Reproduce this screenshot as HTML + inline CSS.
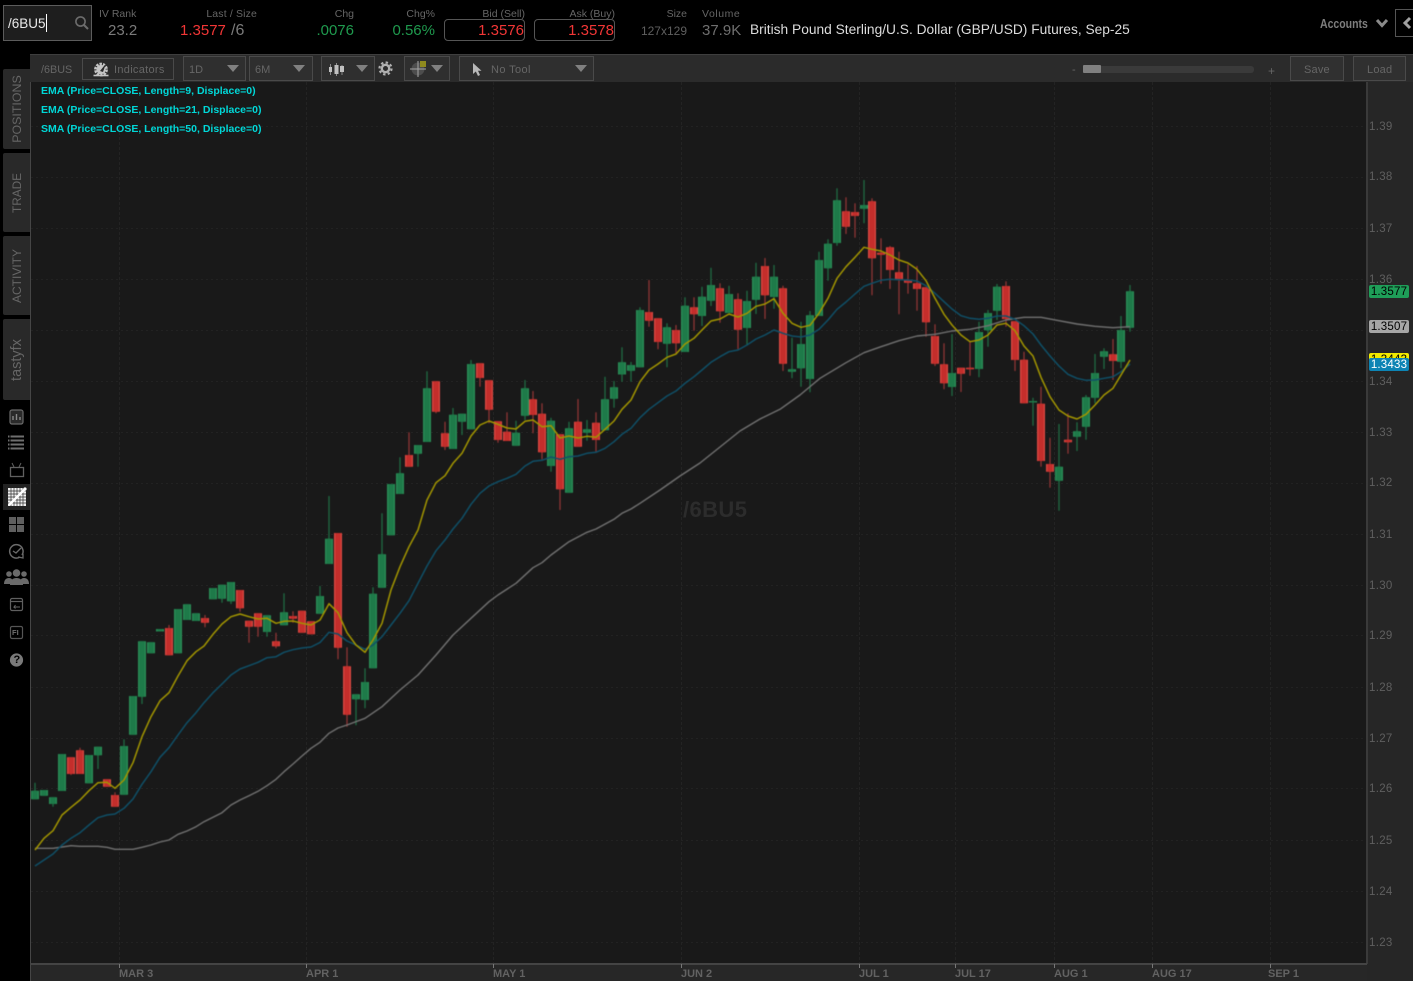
<!DOCTYPE html>
<html lang="en"><head><meta charset="utf-8"><title>/6BU5 chart</title>
<style>
html,body{margin:0;padding:0;background:#000;}
#p{position:relative;width:1413px;height:981px;overflow:hidden;background:#000;font-family:"Liberation Sans",sans-serif;}
#p div,#p span.a{position:absolute;white-space:nowrap;}
.lb{font-size:10.5px;color:#666;top:8px;line-height:13px;}
.v{font-size:15px;top:22px;line-height:18px;}
.r{text-align:right;}
.btn{background:#2a2a2a;border:1px solid #4a4a4a;box-sizing:border-box;color:#666;font-size:11px;}
.tri{width:0;height:0;border-left:6.5px solid transparent;border-right:6.5px solid transparent;border-top:7px solid #808080;}
.tab{left:3px;width:27px;background:#292929;border-radius:2px 0 0 2px;}
.tab span{position:absolute;left:50%;top:50%;transform:translate(-50%,-50%) rotate(-90deg);color:#666;font-size:12.4px;white-space:nowrap;}
.px{left:1369px;font-size:11.5px;color:#5f5f5f;line-height:13px;letter-spacing:.3px;}
.dt{font-size:11px;font-weight:bold;color:#626262;top:968px;line-height:13px;}
.st{left:41px;color:#00d8d8;font-size:10.5px;line-height:13px;font-weight:bold;}
.pill{left:1369px;width:40px;height:13px;overflow:hidden;border-radius:2px;font-size:11.5px;line-height:15px;text-align:center;letter-spacing:.2px;}
</style></head><body><div id="p">

<!-- chart -->
<svg style="position:absolute;left:0;top:0" width="1413" height="981" viewBox="0 0 1413 981">
<defs>
<path id="gb" d="M35 790.7V799.3M44 790V795.7M53 797.3V804M62 754V791M89 755V783.3M98 746.7V755.3M124 746V794.7M133 696V734.7M142 641.3V696.7M151 642.3V653.3M160 629V631.5M178 609V653.3M187 604.3V620M196 613.3V621M213 588V599.3M222 584.7V598.7M231 582V601.3M267 615.3V632M284 612.3V625.3M320 596V613.7M329 538.7V564M356 694.3V699.3M365 682V700M373 593.7V668.3M382 554.3V587.7M391 484V535.3M400 473.3V494M418 445V453.7M427 388.3V442M453 414.7V449M462 413.7V421.7M471 364V429.3M516 432.7V445.7M525 388.3V415.7M551 420.7V466M569 428.3V492.7M587 429.3V432.7M605 399.3V430.3M614 387.3V398.7M622 362.3V374.5M631 365V370.7M640 310V367.3M667 327.3V343.7M685 305.7V352M702 296.7V316M711 285V300.7M729 294V313M747 301V328M756 276.7V299.7M774 276.7V297M792 369.3V371.7M801 344V368.3M810 315.3V379M819 260V316M828 243.7V268.3M837 200.3V243M864 205V208.7M952 373V387M979 332V369M988 313V330.3M997 286.7V310.7M1033 401V402.5M1059 466.7V480.7M1077 431.3V436.7M1086 397.3V426.7M1095 373V397.7M1104 351.3V356.7M1121 330V361.7M1130 291.3V327.7"/>
<path id="rb" d="M71 757.3V774M80 750.3V774M107 779.3V786.7M115 795V806.7M169 628V655.3M205 618V622.7M240 590V608.3M249 620.7V626.7M258 613.3V626.7M276 641.3V646.3M293 616V618.7M302 610.7V632.7M311 621.3V634.3M338 533V647.7M347 666.3V714.7M409 455V466.7M436 381.3V411.7M445 433.3V446.7M480 363.3V378M489 380.3V409.7M498 421.3V440M507 431.7V441M533 399.3V415M542 413.7V452.3M560 434.3V489.3M578 421.7V446.7M596 422.7V440M649 312V320.7M658 318.3V342M676 330V343.3M694 307.3V314.3M720 288.3V311.3M738 299.3V329.7M765 266V295.3M783 288.3V363.7M846 211.3V226.7M855 212V216M872 201.3V258.3M881 252.7V254.7M890 247.3V270M899 272.3V279M908 280.3V282.7M917 283.3V289M926 287.3V322.3M935 336V363.7M944 364.3V383.3M961 367.7V373.7M970 367.7V369.3M1006 286V319M1015 321.3V360M1024 359.7V403.3M1041 403.7V461M1050 464V471.7M1068 439.7V442.3M1113 354.3V361"/>
</defs>
<rect x="30" y="82" width="1337" height="882" fill="#191919"/>
<rect x="1367" y="82" width="46" height="899" fill="#262626"/>
<rect x="30" y="964" width="1337" height="17" fill="#272727"/>
<rect x="1366" y="82" width="2" height="882" fill="#3a3a3a"/>
<rect x="30" y="54" width="1" height="927" fill="#454545"/>
<rect x="30" y="963" width="1337" height="2" fill="#444"/>
<!-- grid -->
<path fill="none" stroke="#222" stroke-width="1" stroke-dasharray="2 3" d="M31 126.5H1366M31 177.5H1366M31 228.5H1366M31 279.5H1366M31 330.5H1366M31 381.5H1366M31 432.5H1366M31 483.5H1366M31 534.5H1366M31 585.5H1366M31 635.5H1366M31 687.5H1366M31 738.5H1366M31 788.5H1366M31 840.5H1366M31 891.5H1366M31 942.5H1366"/>
<path fill="none" stroke="#232323" stroke-width="1" stroke-dasharray="3 2" d="M119.5 82V963M306.5 82V963M493.5 82V963M681.5 82V963M859.5 82V963M955.5 82V963M1054.5 82V963M1152.5 82V963M1270.5 82V963"/>
<path fill="none" stroke="#777" stroke-width="1" d="M119.5 964V968M306.5 964V968M493.5 964V968M681.5 964V968M859.5 964V968M955.5 964V968M1054.5 964V968M1152.5 964V968M1270.5 964V968"/>
<g style="filter:blur(.4px)">
<!-- wicks -->
<path fill="none" stroke="#1f6b42" stroke-width="1.3" d="M35 782.7V791M53 804V806.7M98 755V769M124 739.3V746M142 696V704M222 598V602.7M231 601V604M267 632V636.7M284 593.3V612.3M320 586V596M329 496V539M356 699V725.3M365 668.3V708.3M373 587.3V594M382 513.3V555M400 457.3V474M418 453V466.7M427 371.3V389M453 408V415M462 421V435M471 360V365M516 420.7V433M525 380V420M551 417.7V471.7M569 421.7V429M587 420V440.7M605 376.7V400M614 381V407.7M622 347.3V381.7M631 362V381.7M640 307.3V311M667 323.3V367.3M685 297.3V306M702 286.7V326M711 267.7V306M729 285.7V294M747 290.7V345.3M756 262.7V314M774 265V308.7M792 337.7V378.3M801 321.7V386.7M810 311V392.3M819 251.7V260M828 239.3V280.7M837 188.3V245.7M864 180V223.3M952 334V396M979 321.7V377.3M988 310V346.7M997 284V320M1033 397.7V425.7M1059 424V510.7M1077 422.3V451M1086 395V439.7M1095 354V403.3M1104 348.3V369M1121 316V368.3M1130 285V331.7"/>
<path fill="none" stroke="#8c3333" stroke-width="1.3" d="M71 774V775M80 747.7V751M205 615V627.3M240 608V611.7M249 626V642.7M258 626V636.7M276 632.7V648.3M293 611.3V622.7M338 647V659.3M347 647.3V726.7M409 432.3V456M436 411V413.3M445 421.7V450M489 409V423.3M480 378V386.7M498 440V442.7M507 412.3V432M533 391V433.3M542 403.3V459.3M560 489V510M578 399V422M596 412.3V452.3M649 280V326.7M658 342V349.3M676 325V353.3M694 297.3V330.7M720 283.3V322.7M738 293.3V349M765 258V319M783 285.7V371M846 197.3V234M855 203.3V237.7M872 198.3V295.3M881 238.3V283.7M890 246V289M899 251.7V314.3M908 264.3V293.7M917 266V310.7M926 322V336.7M935 324.3V366M944 343.3V389.3M961 373V392M970 341.7V375.7M1006 281.3V326.7M1015 360V371M1024 351.7V360M1041 386.7V466.7M1050 437.7V487.7M1068 413.3V453.7M1113 339V380M115 792.3V795M169 625V628"/>
<!-- bodies -->
<use href="#gb" fill="none" stroke="#2b8f58" stroke-width="8"/>
<use href="#gb" fill="none" stroke="#1e7a49" stroke-width="5.6"/>
<use href="#rb" fill="none" stroke="#dc4a44" stroke-width="8"/>
<use href="#rb" fill="none" stroke="#c42e2b" stroke-width="5.6"/>
<!-- SMA 50 -->
<polyline fill="none" stroke="#727272" stroke-width="1.4" stroke-linejoin="round" points="35,848.3 53,848.3 71,845.7 80,846.3 98,846.3 107,847.3 115,849.3 133,849.3 142,847.3 151,845 160,842 169,840 178,834.3 187,831 196,826.7 204,821.7 213,817.3 222,812.7 231,805 240,800 249,795.7 258,791.3 267,785.7 276,779.3 284,771.7 293,764 302,756 311,748.3 320,742.3 329,733.3 338,728 347,725 365,718.3 382,706.7 400,690 418,675 436,655 453,635 471,618.3 489,601.7 498,595 516,583.3 533,567.7 542,562.7 551,555 569,541.7 587,532.3 596,529 614,519.3 622,513.3 631,509 640,503.3 660,490 680,476 700,463 720,447 740,431 760,419 780,409.3 800,395 820,378.3 846,362.7 864,352.7 881,346.7 899,340.7 917,336 935,334.3 952,331 970,329.3 988,325.7 1006,320 1024,317.3 1041,317.3 1059,320.7 1077,324 1095,326.3 1113,327.7 1130,326.7"/>
<!-- EMA 21 -->
<polyline fill="none" stroke="#0f5068" stroke-width="1.5" stroke-linejoin="round" points="35,866 44,860 53,854 62,845 71,838.3 80,832.7 89,825 98,817.7 107,815 115,814 124,808.3 133,799 142,784.3 151,771.7 160,757.3 169,747.7 178,735 187,722.7 196,712.7 204,702.7 213,692.7 222,684 231,675 240,669 249,665.7 258,662.3 267,657.7 276,656.7 284,652.3 293,649.7 302,648 311,647 320,642.5 329,632.3 338,634 347,641 356,645 365,649.3 373,645 382,636.7 391,625 400,613.3 409,600.7 418,583.3 427,566 436,550.7 445,540 453,529 462,518.3 471,504.3 480,493.3 489,486 498,481.7 507,478.3 516,474.3 525,466 533,461.3 542,460.3 551,457 560,459.3 569,456.7 578,456 587,453.3 596,452.3 605,448.3 614,441.7 622,434.3 631,428.3 640,417.7 649,409.3 658,402.7 667,396 676,391 685,383.3 694,376.7 702,370 711,362.3 720,356.7 729,351.7 738,350 747,345 756,339 765,335 774,330 783,333.3 792,336 801,337 810,335 819,329.3 828,320 837,309.3 846,302 855,294 864,286.3 872,283.3 881,280.3 890,279.3 899,279.7 908,280 917,281 926,285.7 935,293.3 944,301.7 952,309 961,315.7 970,318.3 979,319.3 988,318.3 997,316 1006,316 1015,319.3 1024,325.7 1033,334 1041,345 1050,356 1059,366 1068,374.3 1077,378.3 1086,380.3 1095,380 1104,378.3 1113,376.7 1121,371.7 1130,364"/>
<!-- EMA 9 -->
<polyline fill="none" stroke="#a39600" stroke-width="1.5" stroke-linejoin="round" points="35,850 44,838.3 53,830.7 62,815 71,807.3 80,800 89,790.7 98,782.7 107,782.3 115,788.3 124,780 133,762.7 142,736.7 151,716.7 160,700.7 169,692.7 178,676 187,660.7 196,651.7 204,646 213,634.3 222,624 231,616.7 240,614 249,616.7 258,619 267,618.3 276,623.3 284,621.3 293,621 302,623.3 311,625 320,620 329,603.7 338,612.7 347,632.7 356,645 365,652.3 373,640 382,623.3 391,590 400,566.7 409,546.7 418,530 427,500 436,482.7 445,475.7 453,463.3 462,453.3 471,436 480,425 489,421 498,424.3 507,428 516,429 525,421.3 533,420 542,426.7 551,425.7 560,438 569,436 578,438 587,436.3 596,437.3 605,429.3 614,421 622,409.3 631,400 640,381.7 649,370 658,364 667,357.3 676,354 685,344 694,338.3 702,330 711,321 720,319 729,314 738,317 747,313.3 756,306.3 765,304 774,298.7 783,313.3 792,323.3 801,327.3 810,325.3 819,313.3 828,298.3 837,278.3 846,266.7 855,257.3 864,247.3 872,249.3 881,251 890,255 899,260 908,263 917,269.3 926,280.7 935,298.3 944,314.3 952,325 961,335 970,341.7 979,340 988,335 997,325 1006,323.3 1015,330.7 1024,346 1033,356 1041,377.3 1050,396.7 1059,410 1068,416 1077,419 1086,414.3 1095,405 1104,395 1113,388.3 1121,375 1130,360"/>
</g>
</svg>

<div style="left:683px;top:496px;font-size:22px;line-height:27px;color:#2c2c2c;font-weight:bold;letter-spacing:.4px;">/6BU5</div>

<!-- top bar -->
<div style="left:3px;top:5px;width:89px;height:36px;box-sizing:border-box;border:1px solid #5c5c5c;background:#1e1e1e;"></div>
<div style="left:8px;top:15px;font-size:13.5px;line-height:17px;color:#e8e8e8;">/6BU5</div>
<div style="left:46px;top:14px;width:1px;height:18px;background:#fff;"></div>
<svg style="position:absolute;left:74px;top:15px" width="16" height="16" viewBox="0 0 16 16"><circle cx="6.5" cy="6.5" r="4.6" fill="none" stroke="#6c6c6c" stroke-width="1.6"/><path d="M10 10L14 14" stroke="#6c6c6c" stroke-width="2"/></svg>

<div class="lb" style="left:99px;">IV Rank</div>
<div class="v" style="left:108px;color:#7a7a7a;">23.2</div>
<div class="lb r" style="left:190px;width:67px;letter-spacing:.15px;">Last / Size</div>
<div class="v" style="left:180px;color:#f23636;">1.3577</div>
<div class="v" style="left:231px;color:#7a7a7a;font-size:16px;">/6</div>
<div class="lb r" style="left:300px;width:54px;">Chg</div>
<div class="v r" style="left:290px;width:64px;color:#1f9a4e;">.0076</div>
<div class="lb r" style="left:380px;width:55px;">Chg%</div>
<div class="v r" style="left:375px;width:60px;color:#1f9a4e;">0.56%</div>
<div class="lb r" style="left:460px;width:65px;">Bid (Sell)</div>
<div style="left:444px;top:19px;width:81px;height:22px;box-sizing:border-box;border:1px solid #555;border-radius:4px;"></div>
<div class="v r" style="left:450px;width:74px;color:#f23636;">1.3576</div>
<div class="lb r" style="left:550px;width:65px;">Ask (Buy)</div>
<div style="left:534px;top:19px;width:81px;height:22px;box-sizing:border-box;border:1px solid #555;border-radius:4px;"></div>
<div class="v r" style="left:540px;width:74px;color:#f23636;">1.3578</div>
<div class="lb r" style="left:650px;width:37px;">Size</div>
<div class="r" style="left:630px;width:57px;top:24px;font-size:12px;line-height:14px;color:#5f5f5f;">127x129</div>
<div class="lb" style="left:702px;letter-spacing:.55px;">Volume</div>
<div class="v" style="left:702px;color:#6f6f6f;">37.9K</div>
<div style="left:750px;top:21px;font-size:13.75px;line-height:17px;color:#dcdcdc;">British Pound Sterling/U.S. Dollar (GBP/USD) Futures, Sep-25</div>
<div style="left:1320px;top:17px;font-size:12.5px;line-height:14px;font-weight:bold;color:#7e7e7e;transform:scaleX(.84);transform-origin:0 0;">Accounts</div>
<svg style="position:absolute;left:1375px;top:18px" width="14" height="11" viewBox="0 0 14 11"><path d="M2 2L7 7.5L12 2" fill="none" stroke="#8a8a8a" stroke-width="3"/></svg>
<div style="left:1395px;top:9px;width:30px;height:28px;box-sizing:border-box;border:1px solid #555;"></div>
<svg style="position:absolute;left:1401px;top:16px" width="12" height="14" viewBox="0 0 12 14"><path d="M9 2L4 7L9 12" fill="none" stroke="#a0a0a0" stroke-width="3"/></svg>

<!-- toolbar -->
<div style="left:30px;top:54px;width:1383px;height:28px;background:#2b2b2b;border-top:1px solid #3e3e3e;box-sizing:border-box;"></div>
<div style="left:41px;top:64px;font-size:10.8px;line-height:13px;color:#666;">/6BUS</div>
<div class="btn" style="left:82px;top:58px;width:92px;height:22px;"></div>
<svg style="position:absolute;left:92px;top:60px" width="18" height="17" viewBox="0 0 18 17"><circle cx="9" cy="9.5" r="5.4" fill="none" stroke="#c4c4c4" stroke-width="3" stroke-dasharray="2.4 1"/><circle cx="9" cy="9.5" r="4.6" fill="#c4c4c4"/><path d="M8 11L14 3.5L11 12Z" fill="#2a2a2a"/><path d="M1.5 15.5H16.5" stroke="#c4c4c4" stroke-width="1.6"/></svg>
<div style="left:114px;top:64px;font-size:11px;line-height:13px;color:#666;letter-spacing:.3px;">Indicators</div>
<div class="btn" style="left:183px;top:56px;width:63px;height:25px;background:#2f2f2f;"></div>
<div style="left:189px;top:64px;font-size:11px;line-height:13px;color:#666;">1D</div>
<div class="tri" style="left:227px;top:65px;"></div>
<div class="btn" style="left:249px;top:56px;width:64px;height:25px;background:#2f2f2f;"></div>
<div style="left:255px;top:64px;font-size:11px;line-height:13px;color:#666;">6M</div>
<div class="tri" style="left:293px;top:65px;"></div>
<div class="btn" style="left:321px;top:56px;width:54px;height:25px;background:#2f2f2f;"></div>
<svg style="position:absolute;left:328px;top:62px" width="17" height="15" viewBox="0 0 17 15"><path d="M2.5 2V13M8.5 1V14M14 3V13" stroke="#8a8a8a" stroke-width="1"/><rect x="1" y="5" width="3" height="5" fill="#c0c0c0"/><rect x="6.5" y="3" width="4" height="9" fill="#c0c0c0"/><rect x="12" y="4" width="4" height="6" fill="#c0c0c0"/></svg>
<div class="tri" style="left:356px;top:65px;"></div>
<svg style="position:absolute;left:378px;top:61px" width="15" height="15" viewBox="0 0 15 15"><circle cx="7.5" cy="7.5" r="3.7" fill="none" stroke="#b0b0b0" stroke-width="2.4"/><circle cx="7.5" cy="7.5" r="6" fill="none" stroke="#b0b0b0" stroke-width="2.2" stroke-dasharray="2.4 2.3"/></svg>
<div class="btn" style="left:404px;top:56px;width:46px;height:25px;background:#2f2f2f;"></div>
<svg style="position:absolute;left:409px;top:59px" width="20" height="19" viewBox="0 0 20 19"><circle cx="9" cy="10" r="6.5" fill="#4d4d4d"/><path d="M1 10H17M9 2V18" stroke="#a5a5a5" stroke-width="1"/><rect x="11" y="2" width="6" height="6" fill="#8f8a1e"/></svg>
<div class="tri" style="left:431px;top:65px;"></div>
<div class="btn" style="left:459px;top:56px;width:135px;height:25px;background:#2f2f2f;"></div>
<svg style="position:absolute;left:471px;top:62px" width="12" height="15" viewBox="0 0 12 15"><path d="M2 1V12L4.8 9.5L7 14L9 13L7 8.8H10.5Z" fill="#b8b8b8"/></svg>
<div style="left:491px;top:64px;font-size:11px;line-height:13px;color:#666;letter-spacing:.4px;">No Tool</div>
<div class="tri" style="left:575px;top:65px;"></div>

<div style="left:1072px;top:64px;font-size:11px;line-height:13px;color:#666;">-</div>
<div style="left:1083px;top:66px;width:171px;height:7px;background:#3a3a3a;border-radius:3px;"></div>
<div style="left:1083px;top:65px;width:18px;height:8px;background:#808080;border-radius:1px;"></div>
<div style="left:1268px;top:64px;font-size:12px;line-height:14px;color:#666;">+</div>
<div class="btn" style="left:1290px;top:56px;width:54px;height:25px;background:#303030;"></div>
<div style="left:1304px;top:64px;font-size:11px;line-height:13px;color:#666;letter-spacing:.2px;">Save</div>
<div class="btn" style="left:1353px;top:56px;width:53px;height:25px;background:#303030;"></div>
<div style="left:1367px;top:64px;font-size:11px;line-height:13px;color:#666;letter-spacing:.2px;">Load</div>

<!-- studies -->
<div class="st" style="top:85px;">EMA (Price=CLOSE, Length=9, Displace=0)</div>
<div class="st" style="top:104px;">EMA (Price=CLOSE, Length=21, Displace=0)</div>
<div class="st" style="top:123px;">SMA (Price=CLOSE, Length=50, Displace=0)</div>

<!-- left tabs -->
<div class="tab" style="top:69px;height:80px;"><span>POSITIONS</span></div>
<div class="tab" style="top:153px;height:79px;"><span style="font-size:11.8px;">TRADE</span></div>
<div class="tab" style="top:236px;height:79px;"><span style="font-size:12px;">ACTIVITY</span></div>
<div class="tab" style="top:319px;height:81px;"><span style="font-size:14.5px;">tastyfx</span></div>

<!-- left icons -->
<div style="left:3px;top:484px;width:27px;height:26px;background:#222;"></div>
<svg style="position:absolute;left:0;top:400px" width="30" height="280" viewBox="0 0 30 280">
<rect x="10" y="10" width="13" height="14" rx="2" fill="#2a2a2a" stroke="#6a6a6a" stroke-width="1.2"/><path d="M13 20V16M16.5 20V14M20 20V17" stroke="#888" stroke-width="1.4"/>
<path d="M8 36.5H24M8 40.5H24M8 44.5H24M8 48.5H24" stroke="#6e6e6e" stroke-width="2"/><path d="M10 35V50" stroke="#000" stroke-width="1"/>
<rect x="10.5" y="67.5" width="13" height="9" fill="none" stroke="#606060" stroke-width="1.3"/><path d="M14 67L12 63M19 67L21 63" stroke="#606060" stroke-width="1"/>
<rect x="8" y="88" width="18" height="18" fill="#f0f0f0"/><path d="M8 91H26M8 94H26M8 97H26M8 100H26M8 103H26M11 88V106M14 88V106M17 88V106M20 88V106M23 88V106" stroke="#333" stroke-width=".7"/><path d="M9 105L25 89" stroke="#fff" stroke-width="2.6"/><circle cx="25" cy="89" r="1.6" fill="#fff"/>
<rect x="9" y="117" width="7" height="7" fill="#5f5f5f"/><rect x="17" y="117" width="7" height="7" fill="#5f5f5f"/><rect x="9" y="125" width="7" height="7" fill="#5f5f5f"/><rect x="17" y="125" width="7" height="7" fill="#5f5f5f"/>
<path d="M22 155A6.7 6.7 0 1 0 20 157" fill="none" stroke="#6a6a6a" stroke-width="1.5"/><path d="M13 151L16 153L21 148" fill="none" stroke="#6a6a6a" stroke-width="1.3"/><path d="M18 157L23 158L23 154" fill="none" stroke="#6a6a6a" stroke-width="1.3"/>
<g fill="#6a6a6a"><circle cx="9" cy="174" r="2.8"/><circle cx="24" cy="174" r="2.8"/><path d="M4 184C4 180 6 178 9 178C12 178 13 180 13 184Z"/><path d="M20 184C20 180 21 178 24 178C27 178 29 180 29 184Z"/><circle cx="16.5" cy="173" r="3.8"/><path d="M10 185C10 180 13 178 16.5 178C20 178 23 180 23 185Z"/></g>
<rect x="10.5" y="198.5" width="12" height="12" rx="1.5" fill="none" stroke="#5f5f5f" stroke-width="1.2"/><path d="M10.5 201.5H22.5" stroke="#5f5f5f" stroke-width="1.2"/><path d="M20 207H14L15.5 205M14 207L15.5 208.5" stroke="#666" stroke-width="1" fill="none"/>
<rect x="10.5" y="226.5" width="12" height="12" rx="1.5" fill="none" stroke="#555" stroke-width="1.2"/>
<circle cx="16.5" cy="260" r="6.6" fill="#7a7a7a"/>
</svg>
<div style="left:12px;top:628px;font-size:7.5px;line-height:9px;font-weight:bold;color:#707070;">FI</div>
<div style="left:13.5px;top:654px;font-size:11px;line-height:13px;font-weight:bold;color:#000;">?</div>

<!-- axis prices -->
<div class="px" style="top:121px;">1.39</div>
<div class="px" style="top:171px;">1.38</div>
<div class="px" style="top:223px;">1.37</div>
<div class="px" style="top:274px;">1.36</div>
<div class="px" style="top:376px;">1.34</div>
<div class="px" style="top:427px;">1.33</div>
<div class="px" style="top:477px;">1.32</div>
<div class="px" style="top:529px;">1.31</div>
<div class="px" style="top:580px;">1.30</div>
<div class="px" style="top:630px;">1.29</div>
<div class="px" style="top:682px;">1.28</div>
<div class="px" style="top:733px;">1.27</div>
<div class="px" style="top:783px;">1.26</div>
<div class="px" style="top:835px;">1.25</div>
<div class="px" style="top:886px;">1.24</div>
<div class="px" style="top:937px;">1.23</div>
<div class="pill" style="top:285px;background:#1e9e58;color:#000;">1.3577</div>
<div class="pill" style="top:320px;background:#a6a6a6;color:#000;">1.3507</div>
<div class="pill" style="top:353px;background:#f2ea00;color:#000;">1.3443</div>
<div class="pill" style="top:358px;background:#0d84b4;color:#fff;">1.3433</div>

<!-- axis dates -->
<div class="dt" style="left:119px;">MAR 3</div>
<div class="dt" style="left:306px;">APR 1</div>
<div class="dt" style="left:493px;">MAY 1</div>
<div class="dt" style="left:681px;">JUN 2</div>
<div class="dt" style="left:859px;">JUL 1</div>
<div class="dt" style="left:955px;">JUL 17</div>
<div class="dt" style="left:1054px;">AUG 1</div>
<div class="dt" style="left:1152px;">AUG 17</div>
<div class="dt" style="left:1268px;">SEP 1</div>
</div></body></html>
